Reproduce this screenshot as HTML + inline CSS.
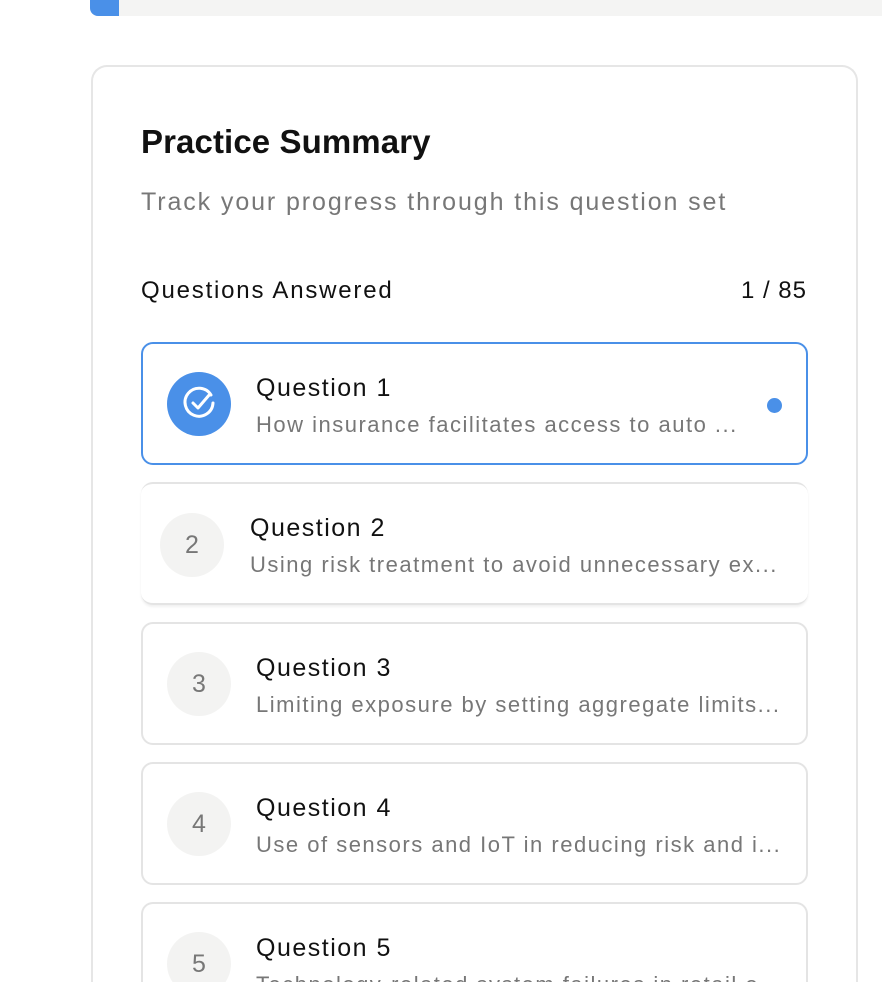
<!DOCTYPE html>
<html style="width:882px;height:982px;overflow:hidden"><head><style>
*{box-sizing:border-box;margin:0;padding:0}
body{width:882px;height:982px;overflow:hidden;background:#fff;font-family:"Liberation Sans",sans-serif;position:relative}
.bar{position:absolute;left:90px;top:0;width:792px;height:16px;background:#f4f4f3;border-radius:0 0 0 8px}
.bar i{position:absolute;left:0;top:0;width:29px;height:16px;background:#4a90e8;border-radius:0 0 0 8px}
.card{position:absolute;left:91px;top:65px;width:767px;height:917px;border:2px solid #e6e6e6;border-bottom:none;border-radius:16px 16px 0 0}
h1{position:absolute;left:141px;top:123px;font-size:33px;font-weight:bold;color:#111;letter-spacing:0.1px}
.sub{position:absolute;left:141px;top:188px;font-size:25px;color:#777;letter-spacing:1.9px}
.qa{position:absolute;left:141px;top:277px;font-size:24px;color:#111;letter-spacing:1.8px}
.cnt{position:absolute;right:75px;top:277px;font-size:24px;color:#111;letter-spacing:1px}
.item{position:absolute;left:141px;width:667px;height:123px;border:2px solid #e4e4e4;border-radius:12px;background:#fff}
.item .c{position:absolute;left:24px;top:28px;width:64px;height:64px;border-radius:50%;background:#f3f3f2;color:#777;font-size:25px;text-align:center;line-height:64px}
.item .t{position:absolute;left:113px;top:30px;font-size:25px;color:#111;letter-spacing:1.5px}
.item .d{position:absolute;left:113px;top:68px;font-size:22px;color:#777;white-space:nowrap;letter-spacing:1.5px}
.sel{border-color:#4a90e8}
.sel .c{background:#4a90e8}
.dot{position:absolute;left:624px;top:54px;width:15px;height:15px;border-radius:50%;background:#4a90e8}
</style></head><body>
<div class="bar"><i></i></div>
<div class="card"></div>
<h1>Practice Summary</h1>
<div class="sub">Track your progress through this question set</div>
<div class="qa">Questions Answered</div>
<div class="cnt">1 / 85</div>
<div class="item sel" style="top:342px"><div class="c"><svg width="64" height="64" viewBox="0 0 64 64"><path d="M44 23 A14 14 0 1 0 46 31" fill="none" stroke="#fff" stroke-width="3" stroke-linecap="round"/><path d="M26 31 L31 36 L43 22" fill="none" stroke="#fff" stroke-width="3" stroke-linecap="round" stroke-linejoin="round"/></svg></div><div class="t">Question 1</div><div class="d">How insurance facilitates access to auto ...</div><div class="dot"></div></div>
<div class="item" style="top:482px;border-left:none;border-right:none;box-shadow:0 2px 2px rgba(0,0,0,.06)"><div class="c" style="left:19px;top:29px">2</div><div class="t" style="left:109px">Question 2</div><div class="d" style="left:109px">Using risk treatment to avoid unnecessary ex...</div></div>
<div class="item" style="top:622px"><div class="c">3</div><div class="t">Question 3</div><div class="d">Limiting exposure by setting aggregate limits...</div></div>
<div class="item" style="top:762px"><div class="c">4</div><div class="t">Question 4</div><div class="d">Use of sensors and IoT in reducing risk and i...</div></div>
<div class="item" style="top:902px;height:80px;border-bottom:none;border-radius:12px 12px 0 0"><div class="c">5</div><div class="t">Question 5</div><div class="d">Technology-related system failures in retail o...</div></div>
</body></html>
